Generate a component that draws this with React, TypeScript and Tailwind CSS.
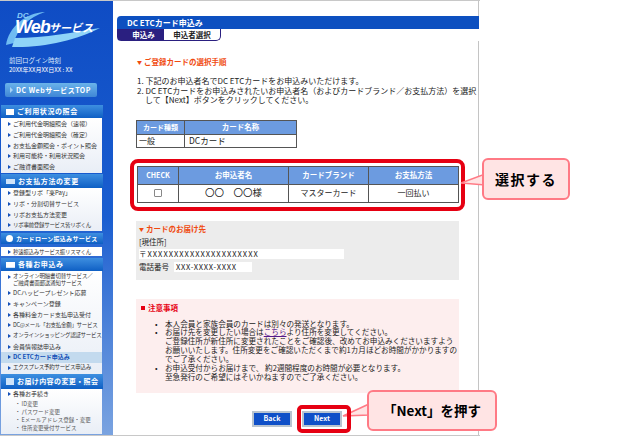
const jp = "font-['Noto_Sans_CJK_JP','Liberation_Sans',sans-serif]";

function Bullet() {
  return <span className="mr-[2px] inline-block h-0 w-0 shrink-0 border-y-[2.5px] border-l-[3px] border-y-transparent border-l-[#1450b8]" />;
}

function MenuHeader({ label, icon, h = 'h-[13px]', text = 'text-[7px] tracking-[0.6px]' }: { label: string; icon: React.ReactNode; h?: string; text?: string }) {
  return (
    <div className={`flex ${h} w-[102px] items-center gap-[3px] bg-gradient-to-b from-[#3d8fe0] to-[#0d5fc4] pl-[5px] leading-none font-bold text-white ${text}`}>
      {icon}
      <span className="whitespace-nowrap">{label}</span>
    </div>
  );
}

function MenuItem({ label, active, narrow }: { label: string; active?: boolean; narrow?: boolean }) {
  return (
    <div className={`flex h-[10.7px] items-center pl-[7px] leading-none whitespace-nowrap ${narrow ? 'text-[5.5px] tracking-[-0.3px]' : 'text-[6px]'} ${active ? 'bg-[#c3daee] font-bold text-[#1450b8]' : 'text-[#333]'}`}>
      <Bullet />
      {label}
    </div>
  );
}

function Sidebar() {
  return (
    <div className="h-full w-[113px] shrink-0 overflow-hidden bg-gradient-to-b from-[#0f4cc4] via-[#1a5ed0] to-[#7aa3e0] pl-px">
      <div className="relative h-[54px]">
        <svg viewBox="0 0 110 54" className="absolute top-0 left-0 h-[54px] w-[110px]">
          <path d="M5 44 C8 26 24 12 44 11 C28 16 16 28 13 42 Z" fill="#6fbcf2" />
          <path d="M11 46 C42 47 76 39 99 27 C74 31 44 37 14 37 Z" fill="#8fd4f8" />
        </svg>
        <span className="absolute top-[11px] left-[16px] font-['Liberation_Sans'] text-[8px] leading-none font-bold text-[#8ccdf8] italic">DC</span>
        <span className="absolute top-[17px] left-[14px] font-['Liberation_Sans'] text-[18px] leading-none font-bold tracking-[-1px] text-white italic">Web</span>
        <span className="absolute top-[21px] left-[48px] text-[11px] leading-none font-bold text-white italic">サービス</span>
      </div>
      <div className="pl-[8px] text-[6.5px] leading-[11px] text-[#dbe8fa]">前回ログイン時刻</div>
      <div className="pl-[8px] text-[6px] leading-[8px] whitespace-nowrap text-white">20XX年XX月XX日XX : XX</div>
      <div className="mt-[9px] ml-[4px] flex h-[14px] w-[92px] items-center rounded-[2px] bg-gradient-to-b from-[#6ab3ea] to-[#3f86d6] pl-[5px] text-[7px] font-bold tracking-[0.5px] whitespace-nowrap text-white">
        <span className="mr-[3px] inline-block h-0 w-0 border-y-[3px] border-l-[3px] border-y-transparent border-l-[#a8d4f5]" />
        DC WebサービスTOP
      </div>

      <div className="mt-[8px]">
        <MenuHeader label="ご利用状況の照会" icon={<span className="h-[6px] w-[8px] bg-white" />} />
        <div className="h-[55px] w-[101px] bg-gradient-to-b from-white to-[#e9eef6] pt-[1px]">
          <MenuItem label="ご利用代金明細照会（速報）" />
          <MenuItem label="ご利用代金明細照会（確定）" />
          <MenuItem label="お支払金額照会・ポイント照会" />
          <MenuItem label="利用可能枠・利用状況照会" />
          <MenuItem label="ご融資書面照会" />
        </div>
      </div>
      <div className="mt-[1px]">
        <MenuHeader label="お支払方法の変更" h="h-[14px]" icon={<span className="h-[5px] w-[9px] bg-[#cfe4fa]" />} />
        <div className="h-[43px] w-[101px] bg-gradient-to-b from-white to-[#e9eef6]">
          <MenuItem label="登録型リボ「楽Pay」" />
          <MenuItem label="リボ・分割切替サービス" />
          <MenuItem label="リボお支払方法変更" />
          <MenuItem label="リボ事前登録サービス皆リボくん" narrow />
        </div>
      </div>
      <div className="mt-[2px]">
        <MenuHeader label="カードローン振込みサービス" h="h-[11px]" text="text-[6px] tracking-[0.3px]" icon={<span className="h-[7px] w-[7px] rounded-full bg-white" />} />
        <div className="mt-[4px] h-[9px] w-[101px] bg-white">
          <div className="-mt-px"><MenuItem label="秒速振込みサービス振リスマくん" narrow /></div>
        </div>
      </div>
      <div className="mt-[2px]">
        <MenuHeader label="各種お申込み" icon={<span className="h-[6px] w-[9px] border-b border-[#cfe4fa] bg-white" />} />
        <div className="h-[103px] w-[101px] bg-gradient-to-b from-white to-[#e9eef6] pt-[2px]">
          <div className="flex h-[15px] pl-[7px] text-[5.5px] leading-[7px] tracking-[-0.2px] whitespace-nowrap text-[#333]">
            <span className="mt-[1px]"><Bullet /></span>
            <span>オンライン明細書切替サービス／<br />ご融資書面郵送通知サービス</span>
          </div>
          <MenuItem label="DCハッピープレゼント応募" />
          <MenuItem label="キャンペーン登録" />
          <MenuItem label="各種料金カード支払申込受付" />
          <MenuItem label="DC@メール「お支払金額」サービス" narrow />
          <MenuItem label="オンラインショッピング認証サービス" narrow />
          <MenuItem label="会員情報誌申込み" />
          <MenuItem label="DC ETCカード申込み" active />
          <MenuItem label="エクスプレス予約サービス申込み" narrow />
        </div>
      </div>
      <MenuHeader label="お届け内容の変更・照会" h="h-[15px]" text="text-[7px] tracking-[0.4px]" icon={<span className="h-[7px] w-[8px] bg-[#cfe4fa]" />} />
      <div className="h-[45px] w-[101px] overflow-hidden bg-gradient-to-b from-white to-[#e9eef6]">
        <MenuItem label="各種お手続き" />
        <div className="mt-px">
          {['ID変更', 'パスワード変更', 'Eメールアドレス登録・変更', '住所変更受付サービス'].map(s => (
            <div key={s} className="flex h-[8px] items-center pl-[14px] text-[5.5px] leading-none whitespace-nowrap text-[#555]">
              <span className="mr-[1px]">・</span>{s}
            </div>
          ))}
        </div>
      </div>
    </div>
  );
}

function Th({ w, children, size = 'text-[7.5px]' }: { w: string; children: React.ReactNode; size?: string }) {
  return <div className={`flex ${w} items-center justify-center border-r-[1px] border-[#555] bg-[#6c9be0] font-bold text-white last:border-r-0 ${size}`}>{children}</div>;
}

function Td({ w, children }: { w: string; children: React.ReactNode }) {
  return <div className={`flex ${w} items-center justify-center border-r-[1px] border-[#555] last:border-r-0`}>{children}</div>;
}

function Main() {
  return (
    <div className="h-full w-[366px] border-r border-[#c4c4c4] pt-[15px] pl-[4px] text-[8px] text-[#222]">
      <div className="flex h-[25px] w-[362px] flex-col overflow-hidden rounded-l-[4px] bg-[#0d50c0]">
        <div className="flex h-[13px] items-center pl-[10px] text-[8px] leading-none font-bold text-white">DC ETCカード申込み</div>
        <div className="flex h-[12px] bg-white">
          <div className="flex w-[47px] items-center justify-center rounded-bl-[4px] bg-[#2a1f80] pl-[6px] text-[7.5px] leading-none font-bold text-white">申込み</div>
          <div className="flex w-[57px] items-center justify-center rounded-br-[5px] border-r border-b border-[#2a1f80] bg-white text-[7.5px] leading-none font-bold text-[#222]">申込者選択</div>
        </div>
      </div>

      <div className="pl-[20px]">
        <div className="mt-[16px] flex items-center gap-[2px] text-[7.5px] leading-[10px] font-bold text-[#f04a10]"><span className="text-[5px]">▼</span> ご登録カードの選択手順</div>
        <div className="mt-[9px] text-[8px] leading-[9.5px] whitespace-nowrap">
          <div>1. 下記のお申込者名でDC ETCカードをお申込みいただけます。</div>
          <div>2. DC ETCカードをお申込みされたいお申込者名（およびカードブランド／お支払方法）を選択</div>
          <div className="pl-[8px]">して【Next】ボタンをクリックしてください。</div>
        </div>

        <div className="-ml-px mt-[15px] w-[161px] border-[1px] border-[#555]">
          <div className="flex h-[13px] leading-none">
            <Th w="w-[48px]" size="text-[7px]">カード種類</Th>
            <Th w="flex-1">カード名称</Th>
          </div>
          <div className="flex h-[13px] border-t-[1px] border-[#555] leading-none">
            <div className="flex w-[48px] items-center border-r-[1px] border-[#555] pl-[2px]">一般</div>
            <div className="flex flex-1 items-center pl-[4px] text-[8.5px]">DCカード</div>
          </div>
        </div>

        <div className="-ml-[7px] mt-[11px] h-[52px] w-[335px] rounded-[8px] border-[4px] border-[#e60012] pt-[3px] pl-[3px]">
          <div className="w-[322px] border-[1px] border-[#555]">
            <div className="flex h-[17px] leading-none">
              <Th w="w-[41px]" size="text-[7px]">CHECK</Th>
              <Th w="w-[110px]">お申込者名</Th>
              <Th w="w-[80px]">カードブランド</Th>
              <Th w="flex-1">お支払方法</Th>
            </div>
            <div className="flex h-[18px] border-t-[1px] border-[#555] leading-none">
              <Td w="w-[41px]"><span className="block h-[8px] w-[8px] rounded-[1px] border border-[#888] bg-white" /></Td>
              <Td w="w-[110px]"><span className="text-[9.5px] whitespace-pre">〇〇　〇〇様</span></Td>
              <Td w="w-[80px]">マスターカード</Td>
              <Td w="flex-1">一回払い</Td>
            </div>
          </div>
        </div>

        <div className="-ml-px mt-[10px] h-[59px] w-[323px] bg-[#ececec] pt-[3px] pl-[3px]">
          <div className="flex items-center gap-[2px] text-[7.5px] leading-[10px] font-bold text-[#f04a10]"><span className="text-[5px]">▼</span> カードのお届け先</div>
          <div className="mt-[3px] text-[7.5px] leading-[10px]">[現住所]</div>
          <div className="mt-[2px] h-[10px] w-[205px] bg-white text-[7.5px] leading-[10px] tracking-[1px] whitespace-nowrap">〒XXXXXXXXXXXXXXXXXXXXX</div>
          <div className="mt-[3px] flex text-[7.5px] leading-[10px] whitespace-nowrap">
            電話番号<span className="ml-[5px] w-[78px] bg-white pl-[2px] tracking-[0.7px]">XXX-XXXX-XXXX</span>
          </div>
        </div>

        <div className="-ml-px mt-[19px] h-[94px] w-[323px] bg-[#fdeeee] pt-[4px] pl-[5px]">
          <div className="flex items-center gap-[3px] text-[7.5px] leading-[10px] font-bold text-[#e60012]"><span className="block h-[4px] w-[4px] bg-[#e60012]" />注意事項</div>
          <div className="mt-[7px] text-[7.6px] leading-[8.85px] whitespace-nowrap">
            <div className="flex"><span className="w-[24px] shrink-0 pl-[14px]">•</span><span>本人会員と家族会員のカードは別々の発送となります。</span></div>
            <div className="flex"><span className="w-[24px] shrink-0 pl-[14px]">•</span><span>お届け先を変更したい場合は<span className="text-[#551a8b] underline">こちら</span>より住所を変更してください。<br />ご登録住所が新住所に変更されたことをご確認後、改めてお申込みくださいますよう<br />お願いいたします。住所変更をご確認いただくまで約1カ月ほどお時間がかかりますの<br />でご了承ください。</span></div>
            <div className="flex"><span className="w-[24px] shrink-0 pl-[14px]">•</span><span>お申込受付からお届けまで、 約2週間程度のお時間が必要となります。<br />至急発行のご希望にはそいかねますのでご了承ください。</span></div>
          </div>
        </div>

        <div className="mt-[18px] flex gap-[10px] pl-[115px]">
          <button className="h-[16px] w-[40px] border-[2px] border-[#b8c4d0] bg-[#0f50c8] text-[7px] leading-none font-bold text-white">Back</button>
          <button className="h-[16px] w-[40px] border-[2px] border-[#b8c4d0] bg-[#0f50c8] text-[7px] leading-none font-bold text-white">Next</button>
        </div>
      </div>
    </div>
  );
}

function Callout({ className, children }: { className: string; children: React.ReactNode }) {
  return (
    <div className={`absolute flex items-center justify-center rounded-[6px] border-[2px] border-[#ff7a85] bg-[#ffe4e4] font-bold whitespace-nowrap text-black ${className}`}>
      {children}
    </div>
  );
}

export default function App() {
  return (
    <div className={`relative h-[436px] w-[630px] overflow-hidden bg-white ${jp}`}>
      <div className="flex h-[436px] w-[480px] border-t border-b border-[#c8c8c8]">
        <Sidebar />
        <Main />
      </div>
      {/* callouts and their tails sit over the page */}
      <svg className="absolute top-0 left-0 h-[436px] w-[630px]">
        <polygon points="461,183 485,174 485,185" fill="#ffe4e4" stroke="#ff7a85" strokeWidth="1.5" />
        <polygon points="343,416 369,404 369,415" fill="#ffe4e4" stroke="#ff7a85" strokeWidth="1.5" />
      </svg>
      <Callout className="top-[158px] left-[482px] h-[42px] w-[88px] text-[14px] tracking-[1.5px]">選択する</Callout>
      <Callout className="top-[390px] left-[367px] h-[41px] w-[130px] text-[13.5px]">「Next」を押す</Callout>
      <div className="absolute top-[405px] left-[297px] h-[28px] w-[54px] rounded-[5px] border-[4px] border-[#e60012]" />
    </div>
  );
}
